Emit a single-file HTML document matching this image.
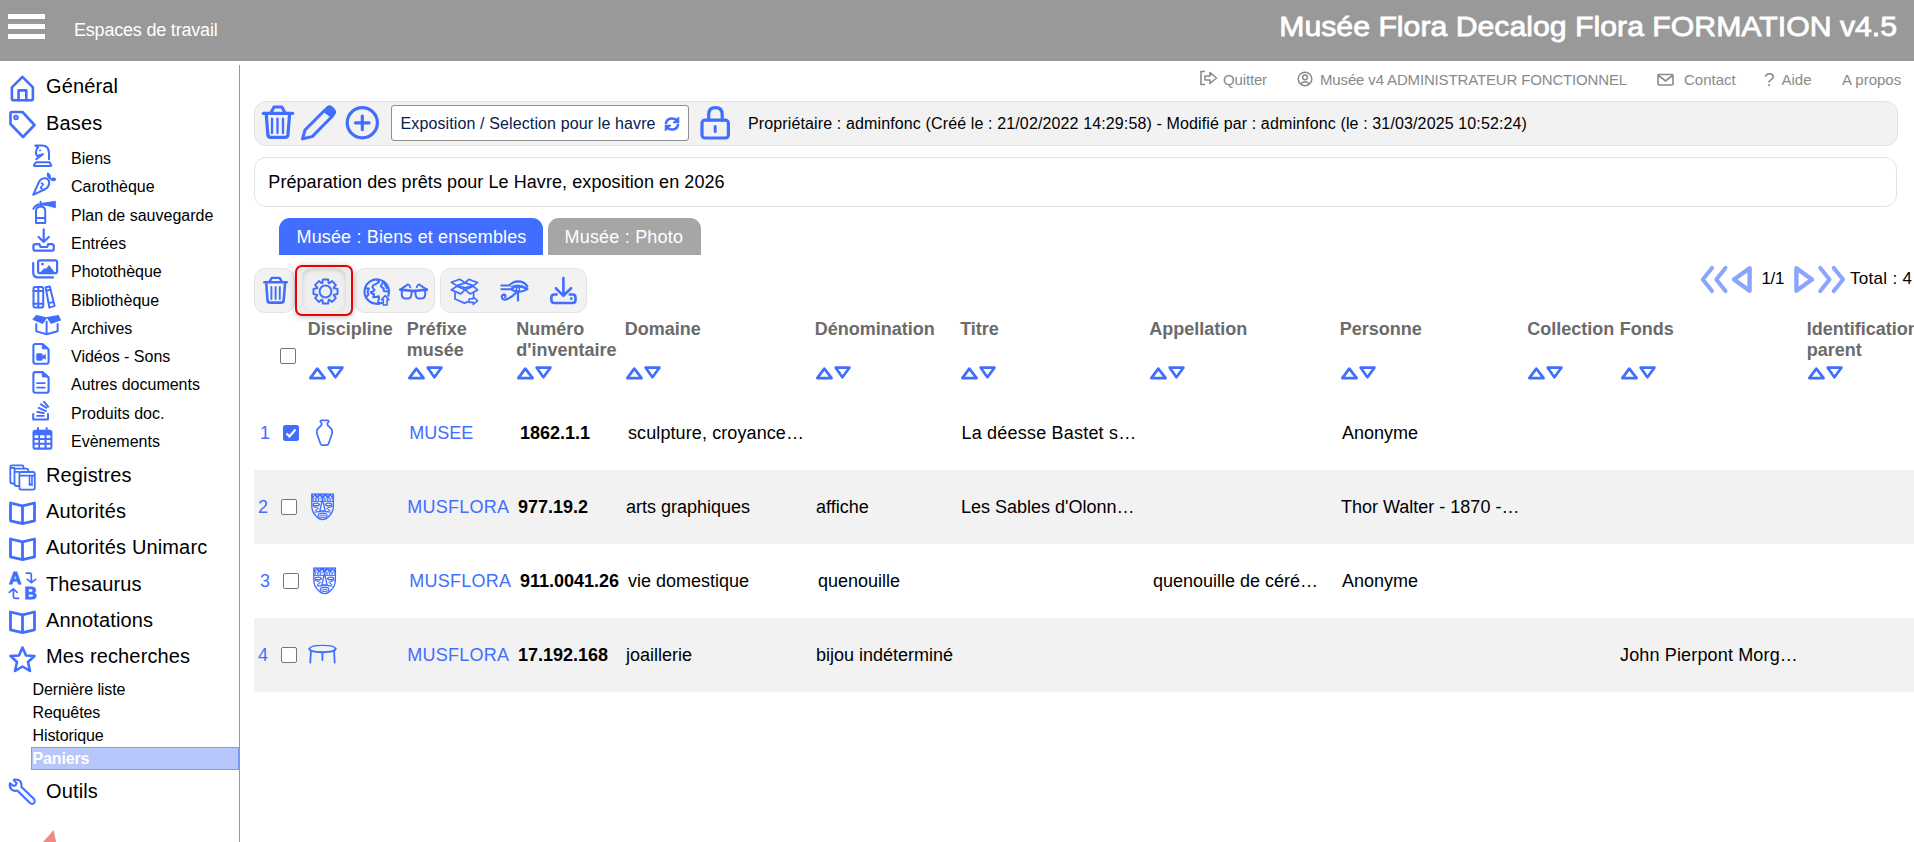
<!DOCTYPE html>
<html><head><meta charset="utf-8"><title>Flora</title>
<style>
html,body{margin:0;padding:0;}
body{width:1914px;height:842px;overflow:hidden;position:relative;background:#fff;font-family:"Liberation Sans",sans-serif;}
.t{position:absolute;white-space:nowrap;}
.ic{position:absolute;overflow:visible;}
</style></head><body>
<div style="position:absolute;left:0;top:0;width:1914px;height:61px;background:#999;"></div>
<div style="position:absolute;left:8px;top:14px;width:37px;height:5px;background:#fff;"></div>
<div style="position:absolute;left:8px;top:24px;width:37px;height:5px;background:#fff;"></div>
<div style="position:absolute;left:8px;top:34px;width:37px;height:5px;background:#fff;"></div>
<div class="t " style="left:74px;top:21px;font-size:18px;line-height:18px;color:#fff;letter-spacing:-0.2px;">Espaces de travail</div>
<div class="t" style="right:17px;top:13px;font-size:28px;line-height:28px;color:#fff;white-space:nowrap;-webkit-text-stroke:0.8px #fff;transform:scaleX(1.08);transform-origin:100% 50%;">Musée Flora Decalog Flora FORMATION v4.5</div>
<div style="position:absolute;left:239px;top:65px;width:1px;height:777px;background:#999;"></div>
<div class="t " style="left:46px;top:76px;font-size:20px;line-height:20px;color:#000;letter-spacing:0.14px;">Général</div>
<div class="t " style="left:46px;top:113px;font-size:20px;line-height:20px;color:#000;letter-spacing:0.14px;">Bases</div>
<div class="t " style="left:46px;top:465px;font-size:20px;line-height:20px;color:#000;letter-spacing:0.14px;">Registres</div>
<div class="t " style="left:46px;top:501px;font-size:20px;line-height:20px;color:#000;letter-spacing:0.14px;">Autorités</div>
<div class="t " style="left:46px;top:537px;font-size:20px;line-height:20px;color:#000;letter-spacing:0.14px;">Autorités Unimarc</div>
<div class="t " style="left:46px;top:574px;font-size:20px;line-height:20px;color:#000;letter-spacing:0.14px;">Thesaurus</div>
<div class="t " style="left:46px;top:610px;font-size:20px;line-height:20px;color:#000;letter-spacing:0.14px;">Annotations</div>
<div class="t " style="left:46px;top:646px;font-size:20px;line-height:20px;color:#000;letter-spacing:0.14px;">Mes recherches</div>
<div class="t " style="left:46px;top:781px;font-size:20px;line-height:20px;color:#000;letter-spacing:0.14px;">Outils</div>
<svg class="ic" style="left:9px;top:74px;width:28px;height:29px;" viewBox="0 0 28 29"><path d="M2.9 13.3 L13.4 2.8 L23.9 13.3 V24.5 Q23.9 26.3 22.1 26.3 H4.7 Q2.9 26.3 2.9 24.5 Z" fill="none" stroke="#416eff" stroke-width="2.6" stroke-linecap="round" stroke-linejoin="round"/><path d="M9.6 26.3 V16.4 H17.3 V26.3" fill="none" stroke="#416eff" stroke-width="2.6" stroke-linecap="round" stroke-linejoin="round"/></svg>
<svg class="ic" style="left:8px;top:110px;width:29px;height:29px;" viewBox="0 0 29 29"><path d="M2.5 3.5 Q2.5 2 4 2 H14.5 L26.5 15 L15 27 L2.5 14 Z" fill="none" stroke="#416eff" stroke-width="2.6" stroke-linecap="round" stroke-linejoin="round"/><circle cx="8" cy="7.5" r="1.8" fill="none" stroke="#416eff" stroke-width="2" stroke-linecap="round" stroke-linejoin="round"/></svg>
<svg class="ic" style="left:8px;top:463px;width:29px;height:29px;" viewBox="0 0 29 29"><path d="M6.5 20.5 H4.5 Q2.3 20.5 2.3 18.5 V4 Q2.3 2.3 4 2.3 H14 Q15.5 2.3 15.5 3.8 V5.5 M2.3 5 H6.5" fill="none" stroke="#416eff" stroke-width="1.8" stroke-linecap="round" stroke-linejoin="round"/><path d="M11.4 23 H8.5 Q6.5 23 6.5 21 V7.5 Q6.5 5.7 8.3 5.7 H18.5 Q20.3 5.7 20.3 7.5 V9 M6.5 8.8 H11.4" fill="none" stroke="#416eff" stroke-width="1.8" stroke-linecap="round" stroke-linejoin="round"/><path d="M13.2 9 H25 Q26.8 9 26.8 11 V25 Q26.8 26.6 25 26.6 H13.2 Q11.4 26.6 11.4 25 V11 Q11.4 9 13.2 9 Z M11.4 12.6 H26.8" fill="none" stroke="#416eff" stroke-width="1.8" stroke-linecap="round" stroke-linejoin="round"/><path d="M21.5 12.6 V22.3 L22.8 21 L24 22.3 V12.6" fill="none" stroke="#416eff" stroke-width="1.6" stroke-linecap="round" stroke-linejoin="round"/></svg>
<svg class="ic" style="left:8px;top:501px;width:29px;height:26px;" viewBox="0 0 29 26"><path d="M2.5 2 L14.5 4.8 L26.5 2 V19.8 L14.5 22.6 L2.5 19.8 Z M14.5 4.8 V22.6" fill="none" stroke="#416eff" stroke-width="2.8" stroke-linecap="round" stroke-linejoin="round"/></svg>
<svg class="ic" style="left:8px;top:537px;width:29px;height:26px;" viewBox="0 0 29 26"><path d="M2.5 2 L14.5 4.8 L26.5 2 V19.8 L14.5 22.6 L2.5 19.8 Z M14.5 4.8 V22.6" fill="none" stroke="#416eff" stroke-width="2.8" stroke-linecap="round" stroke-linejoin="round"/></svg>
<svg class="ic" style="left:8px;top:610px;width:29px;height:26px;" viewBox="0 0 29 26"><path d="M2.5 2 L14.5 4.8 L26.5 2 V19.8 L14.5 22.6 L2.5 19.8 Z M14.5 4.8 V22.6" fill="none" stroke="#416eff" stroke-width="2.8" stroke-linecap="round" stroke-linejoin="round"/></svg>
<div class="t" style="left:9px;top:570px;font-size:17px;line-height:17px;color:#416eff;font-weight:bold;-webkit-text-stroke:0.9px;">A</div><div class="t" style="left:24.5px;top:585px;font-size:17px;line-height:17px;color:#416eff;font-weight:bold;-webkit-text-stroke:0.9px;">B</div><svg class="ic" style="left:0px;top:568px;width:40px;height:36px;" viewBox="0 0 40 36"><path d="M26.2 5.1 H29.8 Q31.3 5.1 31.3 6.6 V14.5 M27.2 11.3 L31.4 14.7 L35.6 11.3" fill="none" stroke="#416eff" stroke-width="1.7" stroke-linecap="round" stroke-linejoin="round"/><path d="M18.7 30.3 H15 Q13.4 30.3 13.4 28.7 V21 M9.3 24.4 L13.3 20.9 L17.2 24.4" fill="none" stroke="#416eff" stroke-width="1.7" stroke-linecap="round" stroke-linejoin="round"/></svg>
<svg class="ic" style="left:8px;top:645px;width:29px;height:28px;" viewBox="0 0 29 28"><path d="M14.5 2.5 L18 10.5 L26.5 11 L20 17 L22 26 L14.5 21.5 L7 26 L9 17 L2.5 11 L11 10.5 Z" fill="none" stroke="#416eff" stroke-width="2.6" stroke-linecap="round" stroke-linejoin="round"/></svg>
<svg class="ic" style="left:8px;top:778px;width:30px;height:30px;" viewBox="0 0 30 30"><path d="M9.3 12.6 L21.5 24.5 Q24.5 27.5 26.5 24.5 Q27.5 22.5 26 21 L13.5 9 Q14 3.5 10.5 2 Q8 1 5.8 1.8 L8.6 5.4 L7.6 7.4 L5 7.8 L2 5.2 Q1 9 3.5 11.5 Q6 13.5 9.3 12.6 Z" fill="none" stroke="#416eff" stroke-width="2.1" stroke-linecap="round" stroke-linejoin="round"/></svg>
<div class="t " style="left:71px;top:151px;font-size:16px;line-height:16px;color:#000;">Biens</div>
<div class="t " style="left:71px;top:179px;font-size:16px;line-height:16px;color:#000;">Carothèque</div>
<div class="t " style="left:71px;top:208px;font-size:16px;line-height:16px;color:#000;">Plan de sauvegarde</div>
<div class="t " style="left:71px;top:236px;font-size:16px;line-height:16px;color:#000;">Entrées</div>
<div class="t " style="left:71px;top:264px;font-size:16px;line-height:16px;color:#000;">Photothèque</div>
<div class="t " style="left:71px;top:293px;font-size:16px;line-height:16px;color:#000;">Bibliothèque</div>
<div class="t " style="left:71px;top:321px;font-size:16px;line-height:16px;color:#000;">Archives</div>
<div class="t " style="left:71px;top:349px;font-size:16px;line-height:16px;color:#000;">Vidéos - Sons</div>
<div class="t " style="left:71px;top:377px;font-size:16px;line-height:16px;color:#000;">Autres documents</div>
<div class="t " style="left:71px;top:406px;font-size:16px;line-height:16px;color:#000;">Produits doc.</div>
<div class="t " style="left:71px;top:434px;font-size:16px;line-height:16px;color:#000;">Evènements</div>
<svg class="ic" style="left:26px;top:140px;width:36px;height:316px;" viewBox="26 140 36 316">
<path d="M49 159.2 V153.5 Q49 145.4 42 145.4 H35.3 L38.1 147.6 Q35.9 149.5 35.9 152.2 Q35.9 155 37.2 156 L43 154.2 L36.2 159.2" fill="none" stroke="#416eff" stroke-width="2" stroke-linecap="round" stroke-linejoin="round"/>
<ellipse cx="40.1" cy="150.4" rx="1.1" ry="0.8" fill="#416eff"/>
<path d="M34.6 166 H50.4 Q51.6 166 51.1 164.9 L49.6 162.3 H36 L34 164.9 Q33.5 166 34.6 166 Z" fill="none" stroke="#416eff" stroke-width="2" stroke-linecap="round" stroke-linejoin="round"/>
<path d="M33.2 194.8 L39.5 180.8 Q42 177.8 45.5 178.3 Q49.5 179.3 49.2 183.6 Q48.8 187 45.3 189 Z" fill="none" stroke="#416eff" stroke-width="2" stroke-linecap="round" stroke-linejoin="round"/>
<path d="M41.4 183 L43.4 184.3 L40.5 187.8 L42.5 189.2" fill="none" stroke="#416eff" stroke-width="1.5" stroke-linecap="round" stroke-linejoin="round"/>
<path d="M47.6 173.2 Q50.8 174.5 50.3 178.8 Q46.8 177.5 47.6 173.2 Z" fill="#416eff" stroke="#416eff" stroke-width="1.3" stroke-linejoin="round"/>
<path d="M50.8 179.4 Q53.5 177 55.6 179.2 Q53.5 181.6 50.8 179.4 Z" fill="#416eff" stroke="#416eff" stroke-width="1.3" stroke-linejoin="round"/>
<path d="M36 223 V211 Q36 206.4 40.6 206.4 Q45.2 206.4 45.2 211 V223 Z M36 218 H45.2" fill="none" stroke="#416eff" stroke-width="2" stroke-linecap="round" stroke-linejoin="round"/>
<path d="M40.6 201.8 V206.4 M40.6 204.3 Q35.8 204.3 33.4 208.8" fill="none" stroke="#416eff" stroke-width="2" stroke-linecap="round" stroke-linejoin="round"/>
<path d="M40.6 203.4 L47 202.6 L55.4 201.2 V207.7 L47 205.4 L40.6 205 Z" fill="#416eff" stroke="#416eff" stroke-width="0.8" stroke-linejoin="round"/>
<path d="M43.7 229.4 V242 M38.6 237 L43.7 242 L48.8 237" fill="none" stroke="#416eff" stroke-width="2.2" stroke-linecap="round" stroke-linejoin="round"/>
<path d="M39.4 244.2 H35.4 Q33.4 244.2 33.4 246.2 V248.7 Q33.4 250.7 35.4 250.7 H51.8 Q53.8 250.7 53.8 248.7 V246.2 Q53.8 244.2 51.8 244.2 H48.2 L47.2 247 H40.6 Z" fill="none" stroke="#416eff" stroke-width="2.2" stroke-linecap="round" stroke-linejoin="round"/>
<rect x="38.1" y="260.3" width="19" height="12.9" rx="2" fill="none" stroke="#416eff" stroke-width="2.2" stroke-linecap="round" stroke-linejoin="round"/>
<circle cx="42.5" cy="264.1" r="1.4" fill="#416eff"/>
<path d="M39.5 273.2 L44.4 268.1 L45.9 269 L49 265 L55.4 273.2 Z" fill="#416eff"/>
<path d="M33.2 263 V272.5 Q33.2 277.4 38 277.4 H53" fill="none" stroke="#416eff" stroke-width="2.2" stroke-linecap="round" stroke-linejoin="round"/>
<rect x="33.5" y="287" width="9.7" height="20.5" rx="1.5" fill="none" stroke="#416eff" stroke-width="2" stroke-linecap="round" stroke-linejoin="round"/>
<path d="M38.3 287 V307.5 M33.5 291 H43.2 M33.5 303.8 H43.2" fill="none" stroke="#416eff" stroke-width="2" stroke-linecap="round" stroke-linejoin="round"/>
<path d="M45.6 287.2 L49.8 286.4 L54.6 305.9 L49.4 307.6 Z M46.5 290.6 L50.7 289.7 M48.7 303.1 L53.4 302" fill="none" stroke="#416eff" stroke-width="2" stroke-linecap="round" stroke-linejoin="round"/>
<path d="M33.2 319.5 L36.3 315.7 L46.3 317.8 L42.5 323.3 Z M47.3 317.6 L58.3 315.7 L60.4 319.9 L51.4 323.3 Z" fill="#416eff" stroke="#416eff" stroke-width="1.2" stroke-linejoin="round"/>
<path d="M36.3 324 V331.4 L46.6 334.3 L57.6 331.2 V324 M46.6 321.8 V334.3" fill="none" stroke="#416eff" stroke-width="2" stroke-linecap="round" stroke-linejoin="round"/>
<path d="M33.4 346 Q33.4 344 35.4 344 H42.5 L48.6 349.5 V361.8 Q48.6 363.8 46.6 363.8 H35.4 Q33.4 363.8 33.4 361.8 Z" fill="none" stroke="#416eff" stroke-width="2.1" stroke-linecap="round" stroke-linejoin="round"/>
<path d="M42.3 343.5 V348.8 H49 Z" fill="#416eff" stroke="#416eff" stroke-width="1" stroke-linejoin="round"/>
<rect x="36.2" y="353.2" width="6.6" height="7.5" rx="1.6" fill="#416eff"/>
<path d="M42.2 356 L45.8 353.9 V359.8 L42.2 357.9 Z" fill="#416eff"/>
<path d="M33.4 374.1 Q33.4 372.1 35.4 372.1 H42.5 L48.6 377.6 V390.7 Q48.6 392.7 46.6 392.7 H35.4 Q33.4 392.7 33.4 390.7 Z" fill="none" stroke="#416eff" stroke-width="2.1" stroke-linecap="round" stroke-linejoin="round"/>
<path d="M42.3 371.6 V376.9 H49 Z" fill="#416eff" stroke="#416eff" stroke-width="1" stroke-linejoin="round"/>
<path d="M37 383.1 H44.8 M37 387.6 H44.8" fill="none" stroke="#416eff" stroke-width="1.9" stroke-linecap="round" stroke-linejoin="round"/>
<path d="M33.2 413.2 V419.5 H48 V413.2" fill="none" stroke="#416eff" stroke-width="2" stroke-linecap="butt" stroke-linejoin="round"/>
<path d="M36.3 415.9 H44.5 M36.6 411.8 L44.5 413.2 M38 407.6 L46.6 411.4 M40.4 403.9 L46.9 408.3 M43.5 401.1 L48.7 407.3" fill="none" stroke="#416eff" stroke-width="1.9" stroke-linecap="butt" stroke-linejoin="round"/>
<rect x="32.5" y="429.7" width="19.9" height="20" rx="2.6" fill="#416eff"/>
<path d="M38 427.3 V431 M46.6 427.3 V431" fill="none" stroke="#416eff" stroke-width="2" stroke-linecap="butt" stroke-linejoin="round"/>
<path d="M34.6 435.2 H38.3 V438 H34.6 Z M40 435.2 H44.5 V438 H40 Z M46.6 435.2 H50.4 V438 H46.6 Z M34.6 440 H38.3 V442.8 H34.6 Z M40 440 H44.5 V442.8 H40 Z M46.6 440 H50.4 V442.8 H46.6 Z M34.6 444.8 H38.3 V447.6 H34.6 Z M40 444.8 H44.5 V447.6 H40 Z M46.6 444.8 H50.4 V447.6 H46.6 Z" fill="#fff"/>
</svg>
<div class="t " style="left:32.5px;top:682px;font-size:16px;line-height:16px;color:#000;letter-spacing:-0.1px;">Dernière liste</div>
<div class="t " style="left:32.5px;top:705px;font-size:16px;line-height:16px;color:#000;letter-spacing:-0.1px;">Requêtes</div>
<div class="t " style="left:32.5px;top:728px;font-size:16px;line-height:16px;color:#000;letter-spacing:-0.1px;">Historique</div>
<div style="position:absolute;left:31px;top:747px;width:206px;height:21px;background:#b7c7fb;border:1px solid #7d9bf8;"></div>
<div class="t " style="left:32.5px;top:751px;font-size:16px;line-height:16px;color:#fff;font-weight:bold;letter-spacing:-0.15px;">Paniers</div>
<svg class="ic" style="left:40px;top:828px;width:20px;height:14px;" viewBox="0 0 20 14"><path d="M3 14 L13.7 2 L16 14 Z" fill="#ee8a82"/></svg>
<svg class="ic" style="left:1199px;top:70px;width:20px;height:16px;" viewBox="0 0 20 16"><path d="M6 1.5 H2 V14.5 H6" fill="none" stroke="#8a8a8a" stroke-width="1.6"/><path d="M6 6 H11 V2.5 L17.5 8 L11 13.5 V10 H6 Z" fill="none" stroke="#8a8a8a" stroke-width="1.6" stroke-linejoin="round"/></svg>
<div class="t " style="left:1223px;top:72px;font-size:15px;line-height:15px;color:#8a8a8a;letter-spacing:-0.15px;">Quitter</div>
<svg class="ic" style="left:1297px;top:71px;width:16px;height:16px;" viewBox="0 0 16 16"><circle cx="8" cy="8" r="6.8" fill="none" stroke="#8a8a8a" stroke-width="1.5"/><circle cx="8" cy="6.3" r="2.4" fill="none" stroke="#8a8a8a" stroke-width="1.5"/><path d="M3.8 12.8 Q8 8.5 12.2 12.8" fill="none" stroke="#8a8a8a" stroke-width="1.5"/></svg>
<div class="t " style="left:1320px;top:72px;font-size:15px;line-height:15px;color:#8a8a8a;letter-spacing:-0.15px;">Musée v4 ADMINISTRATEUR FONCTIONNEL</div>
<svg class="ic" style="left:1657px;top:73px;width:17px;height:13px;" viewBox="0 0 17 13"><rect x="1" y="1.5" width="15" height="10.5" rx="1" fill="none" stroke="#8a8a8a" stroke-width="1.6"/><path d="M1.5 2.5 L8.5 8 L15.5 2.5" fill="none" stroke="#8a8a8a" stroke-width="1.6"/></svg>
<div class="t " style="left:1684px;top:72px;font-size:15px;line-height:15px;color:#8a8a8a;">Contact</div>
<div class="t " style="left:1764px;top:70px;font-size:19px;line-height:19px;color:#8a8a8a;">?</div>
<div class="t " style="left:1781.5px;top:72px;font-size:15px;line-height:15px;color:#8a8a8a;">Aide</div>
<div class="t " style="left:1842px;top:72px;font-size:15px;line-height:15px;color:#8a8a8a;">A propos</div>
<div style="position:absolute;left:254px;top:101px;width:1642px;height:43px;background:#f2f2f2;border:1px solid #e3e3e3;border-radius:12px;"></div>
<svg class="ic" style="left:262px;top:105px;width:32px;height:36px;" viewBox="0 0 32 36"><path d="M1.3 8.3 H30.6" fill="none" stroke="#416eff" stroke-width="3.2" stroke-linecap="round" stroke-linejoin="round"/><path d="M8.9 7.8 L12 2 H19.9 L23 7.8" fill="none" stroke="#416eff" stroke-width="3" stroke-linecap="round" stroke-linejoin="round"/><path d="M4.3 10.2 L5.9 30.3 Q6.2 32.4 8.6 32.4 H23.2 Q25.6 32.4 25.9 30.3 L27.5 10.2" fill="none" stroke="#416eff" stroke-width="3.2" stroke-linecap="round" stroke-linejoin="round"/><path d="M10 13.6 V28 M15.5 13.6 V28 M21 13.6 V28" fill="none" stroke="#416eff" stroke-width="2.3" stroke-linecap="round" stroke-linejoin="round"/></svg>
<svg class="ic" style="left:301px;top:105px;width:36px;height:36px;" viewBox="0 0 36 36"><path d="M4 25 L23.2 5.8 L31.5 11 L11.2 31.6 L1.5 33.8 Z" fill="none" stroke="#416eff" stroke-width="3" stroke-linecap="round" stroke-linejoin="round"/><path d="M23.2 5.8 L26.5 2.5 Q28.5 0.8 30.5 2.5 L33 5 Q34.8 7 33 9 L30.5 11.5 Z" fill="#416eff" stroke="#416eff" stroke-width="2.6" stroke-linejoin="round"/></svg>
<svg class="ic" style="left:344px;top:105px;width:36px;height:36px;" viewBox="0 0 36 36"><circle cx="18.3" cy="17.7" r="15.1" fill="none" stroke="#416eff" stroke-width="3.2" stroke-linecap="round" stroke-linejoin="round"/><path d="M18.3 11 V24.6 M11.5 17.8 H25.1" fill="none" stroke="#416eff" stroke-width="3.2" stroke-linecap="round" stroke-linejoin="round"/></svg>
<div style="position:absolute;left:391px;top:105px;width:296px;height:34px;background:#fff;border:1px solid #8f8f8f;border-radius:3px;"></div>
<div class="t " style="left:400.5px;top:116px;font-size:16px;line-height:16px;color:#06204f;letter-spacing:0.12px;">Exposition / Selection pour le havre</div>
<svg class="ic" style="left:663px;top:116px;width:18px;height:16px;" viewBox="0 0 18 16"><path d="M3 7 Q4 2.5 9 2.5 Q12.5 2.5 14.5 5" fill="none" stroke="#416eff" stroke-width="2.6" stroke-linecap="round" stroke-linejoin="round"/><path d="M15.5 1 V6.5 H10" fill="#416eff" stroke="#416eff" stroke-width="1.5"/><path d="M15 9 Q14 13.5 9 13.5 Q5.5 13.5 3.5 11" fill="none" stroke="#416eff" stroke-width="2.6" stroke-linecap="round" stroke-linejoin="round"/><path d="M2.5 15 V9.5 H8" fill="#416eff" stroke="#416eff" stroke-width="1.5"/></svg>
<svg class="ic" style="left:699px;top:105px;width:32px;height:36px;" viewBox="0 0 32 36"><path d="M9.7 15 V9.4 Q9.7 2.6 16.45 2.6 Q23.2 2.6 23.2 9.4 V15" fill="none" stroke="#416eff" stroke-width="3.2" stroke-linecap="round" stroke-linejoin="round"/><rect x="3" y="15.2" width="26.4" height="17.8" rx="3" fill="none" stroke="#416eff" stroke-width="3.2" stroke-linecap="round" stroke-linejoin="round"/><path d="M16.2 21.6 V26.5" fill="none" stroke="#416eff" stroke-width="3" stroke-linecap="round" stroke-linejoin="round"/></svg>
<div class="t " style="left:748px;top:116px;font-size:16px;line-height:16px;color:#000;letter-spacing:0.13px;">Propriétaire : adminfonc (Créé le : 21/02/2022 14:29:58) - Modifié par : adminfonc (le : 31/03/2025 10:52:24)</div>
<div style="position:absolute;left:254px;top:157px;width:1641px;height:48px;background:#fff;border:1px solid #e3e3e3;border-radius:12px;"></div>
<div class="t " style="left:268.3px;top:173px;font-size:18px;line-height:18px;color:#000;letter-spacing:0.075px;">Préparation des prêts pour Le Havre, exposition en 2026</div>
<div style="position:absolute;left:279px;top:218px;width:264px;height:37px;background:#416eff;border-radius:11px 11px 0 0;"></div>
<div class="t " style="left:296.5px;top:228px;font-size:18px;line-height:18px;color:#fff;letter-spacing:0.15px;">Musée : Biens et ensembles</div>
<div style="position:absolute;left:548px;top:218px;width:153px;height:37px;background:#a6a6a6;border-radius:11px 11px 0 0;"></div>
<div class="t " style="left:564.5px;top:228px;font-size:18px;line-height:18px;color:#fff;letter-spacing:0.2px;">Musée : Photo</div>
<div style="position:absolute;top:268px;height:43px;background:#f2f2f2;border:1px solid #e3e3e3;border-radius:11px;left:254px;width:39px;"></div>
<div style="position:absolute;top:268px;height:43px;background:#f2f2f2;border:1px solid #e3e3e3;border-radius:11px;left:354px;width:79px;"></div>
<div style="position:absolute;top:268px;height:43px;background:#f2f2f2;border:1px solid #e3e3e3;border-radius:11px;left:440px;width:145px;"></div>
<div style="position:absolute;left:295px;top:265px;width:54px;height:47px;border:2px solid #ee0000;border-radius:7px;background:#ececec;box-shadow:0 1px 6px rgba(0,0,0,0.25);"></div>
<div style="position:absolute;left:302px;top:268px;width:44px;height:44px;border-radius:10px;background:#efefef;box-shadow:inset 0 2px 4px rgba(0,0,0,0.15);"></div>
<svg class="ic" style="left:260px;top:272px;width:30px;height:36px;" viewBox="260 272 30 36"><path d="M264.4 282.3 H286.8" fill="none" stroke="#416eff" stroke-width="2.6" stroke-linecap="round" stroke-linejoin="round"/><path d="M269.5 281.6 L271.8 277.9 H279.6 L281.8 281.6" fill="none" stroke="#416eff" stroke-width="2.4" stroke-linecap="round" stroke-linejoin="round"/><path d="M266.3 284 L267.5 300.5 Q267.8 302.6 270 302.6 H281.2 Q283.4 302.6 283.7 300.5 L285 284" fill="none" stroke="#416eff" stroke-width="2.6" stroke-linecap="round" stroke-linejoin="round"/><path d="M271.4 287 V299 M275.6 287 V299 M279.8 287 V299" fill="none" stroke="#416eff" stroke-width="1.9" stroke-linecap="round" stroke-linejoin="round"/></svg>
<svg class="ic" style="left:300px;top:270px;width:290px;height:40px;" viewBox="300 270 290 40">
<path d="M322.88 279.48 L328.12 279.48 L328.67 283.08 L329.21 283.30 L332.14 281.15 L335.85 284.86 L333.70 287.79 L333.92 288.33 L337.52 288.88 L337.52 294.12 L333.92 294.67 L333.70 295.21 L335.85 298.14 L332.14 301.85 L329.21 299.70 L328.67 299.92 L328.12 303.52 L322.88 303.52 L322.33 299.92 L321.79 299.70 L318.86 301.85 L315.15 298.14 L317.30 295.21 L317.08 294.67 L313.48 294.12 L313.48 288.88 L317.08 288.33 L317.30 287.79 L315.15 284.86 L318.86 281.15 L321.79 283.30 L322.33 283.08 Z" fill="none" stroke="#416eff" stroke-width="2" stroke-linecap="round" stroke-linejoin="round"/><circle cx="325.5" cy="291.5" r="5.9" fill="none" stroke="#416eff" stroke-width="2" stroke-linecap="round" stroke-linejoin="round"/>
<path d="M381.6 302.9 Q378 304.5 376.5 303.8 A12.2 12.2 0 1 1 388.2 295.8" fill="none" stroke="#416eff" stroke-width="2.1" stroke-linecap="round" stroke-linejoin="round"/>
<path d="M365.1 288.2 L368.9 288.6 L367.5 292 L368.5 294.3 L366.6 296.7" fill="none" stroke="#416eff" stroke-width="2" stroke-linecap="round" stroke-linejoin="round"/>
<path d="M377 280 Q380 282 378.4 282.7 L373.2 285.3 Q371.8 287 372.7 287.6 L374.6 290 Q374 291.5 370.8 292 Q371 293.5 374.2 294.3 L373.2 297.2 Q376 297 378.9 296.2 Q379.5 298 378.4 300.5 L378 302.9 H381.8" fill="none" stroke="#416eff" stroke-width="2" stroke-linecap="round" stroke-linejoin="round"/>
<path d="M383.2 282 L380.8 286.3 L383.7 288.6 L383.7 291 L387.9 291.5 M384.6 283.9 L386.8 288.4" fill="none" stroke="#416eff" stroke-width="2" stroke-linecap="round" stroke-linejoin="round"/>
<path d="M383.3 305 V299.6 H381.5 L385.2 295.6 L388.9 299.6 H387.1 V305 Z" fill="none" stroke="#416eff" stroke-width="1.6" stroke-linecap="round" stroke-linejoin="round"/>
<path d="M400.3 289.6 L413.6 291 L426.9 289.6" fill="none" stroke="#416eff" stroke-width="2.6" stroke-linecap="round" stroke-linejoin="round"/>
<path d="M401.8 290 V294.5 Q401.8 298.6 406 298.6 H407.5 Q411.2 298.6 411.5 294 L411.8 290.6 M425.2 290 V294.5 Q425.2 298.6 421 298.6 H419.5 Q415.8 298.6 415.5 294 L415.2 290.6" fill="none" stroke="#416eff" stroke-width="2" stroke-linecap="round" stroke-linejoin="round"/>
<path d="M400.3 289.6 L407.9 284.4 Q409 284.2 410.3 287.2 M426.9 289.6 L419 284.4 Q418 284.2 416.7 287.2" fill="none" stroke="#416eff" stroke-width="1.9" stroke-linecap="round" stroke-linejoin="round"/>
<path d="M451.3 282.2 L459.7 279.3 L465.2 282.8 L456.8 285.6 Z M468.7 279.3 L477.6 282.6 L473.3 285.6 L465.2 282.8 Z M456.8 285.6 L465.2 283 L473.3 285.6 L465.2 287.7 Z" fill="none" stroke="#416eff" stroke-width="1.7" stroke-linecap="round" stroke-linejoin="round"/>
<path d="M451.3 289.9 L456.8 286.3 L465.2 289.6 L460.8 293.9 Z M465.2 289.6 L473.3 286.3 L477.6 289.9 L470 293.9 Z" fill="none" stroke="#416eff" stroke-width="1.7" stroke-linecap="round" stroke-linejoin="round"/>
<path d="M455 292.5 V299 L464.5 303.1 L468.1 301.6 M473.6 292.5 V296.9" fill="none" stroke="#416eff" stroke-width="1.7" stroke-linecap="round" stroke-linejoin="round"/>
<path d="M469.2 298.7 H473.3 V297.2 L477.6 300.6 L473.3 304.4 V302.4 H469.2 Z" fill="none" stroke="#416eff" stroke-width="1.6" stroke-linecap="round" stroke-linejoin="round"/>
<path d="M501.4 285.5 H509.1 Q513 281.5 517.9 281.3 Q524 281.3 527.4 286.3" fill="none" stroke="#416eff" stroke-width="2.2" stroke-linecap="round" stroke-linejoin="round"/>
<path d="M511.3 286.9 Q517.9 283 527.4 288.3" fill="none" stroke="#416eff" stroke-width="1.5" stroke-linecap="round" stroke-linejoin="round"/>
<path d="M501.4 289.2 H509.8 M511 289.2 Q517.9 283.8 527.4 289.2 Q517.9 294.5 511 289.2" fill="none" stroke="#416eff" stroke-width="2.1" stroke-linecap="round" stroke-linejoin="round"/>
<circle cx="517.9" cy="289.2" r="1.7" fill="none" stroke="#416eff" stroke-width="1.5" stroke-linecap="round" stroke-linejoin="round"/>
<path d="M516.4 292.3 Q512 297.5 506.5 299.4 Q502.3 300.3 501.8 297 Q501.8 294.6 504.2 294.6 Q506 295.2 505.2 297" fill="none" stroke="#416eff" stroke-width="2.2" stroke-linecap="round" stroke-linejoin="round"/>
<path d="M518 292.5 V300.5" fill="none" stroke="#416eff" stroke-width="2.2" stroke-linecap="round" stroke-linejoin="round"/>
<path d="M563.4 278 V295.8 M555.8 288.2 L563.4 295.8 L571.1 288.2" fill="none" stroke="#416eff" stroke-width="2.6" stroke-linecap="round" stroke-linejoin="round"/>
<path d="M556.7 294.5 H554.4 Q551.4 294.5 551.4 297.5 V300 Q551.4 303 554.4 303 H572.5 Q575.5 303 575.5 300 V297.5 Q575.5 294.5 572.5 294.5 H569.8" fill="none" stroke="#416eff" stroke-width="2.6" stroke-linecap="round" stroke-linejoin="round"/>
<circle cx="571.3" cy="298.7" r="1.4" fill="#416eff"/>
</svg>
<svg class="ic" style="left:1699px;top:264px;width:32px;height:31px;" viewBox="0 0 32 31"><path d="M13 3.9 L3.8 15.5 L13 27.1 M26.5 3.9 L17.3 15.5 L26.5 27.1" fill="none" stroke="#8aa5fb" stroke-linecap="round" stroke-linejoin="round" stroke-width="4"/></svg>
<svg class="ic" style="left:1730px;top:264px;width:24px;height:31px;" viewBox="0 0 24 31"><path d="M19.6 4.3 V26.7 L4 15.5 Z" fill="none" stroke="#8aa5fb" stroke-linecap="round" stroke-linejoin="round" stroke-width="4.4"/></svg>
<div class="t " style="left:1761.5px;top:270px;font-size:17px;line-height:17px;color:#000;letter-spacing:-0.4px;">1/1</div>
<svg class="ic" style="left:1792px;top:264px;width:24px;height:31px;" viewBox="0 0 24 31"><path d="M4.4 4.3 V26.7 L20 15.5 Z" fill="none" stroke="#8aa5fb" stroke-linecap="round" stroke-linejoin="round" stroke-width="4.4"/></svg>
<svg class="ic" style="left:1816px;top:264px;width:32px;height:31px;" viewBox="0 0 32 31"><path d="M4.3 3.9 L13.5 15.5 L4.3 27.1 M17.8 3.9 L27 15.5 L17.8 27.1" fill="none" stroke="#8aa5fb" stroke-linecap="round" stroke-linejoin="round" stroke-width="4"/></svg>
<div class="t " style="left:1850px;top:270px;font-size:17px;line-height:17px;color:#000;letter-spacing:0.3px;">Total : 4</div>
<div class="t" style="left:307.7px;top:319.26px;font-size:18px;line-height:20.6px;color:#6b6b6b;font-weight:bold;">Discipline</div>
<svg class="ic" style="left:307.5px;top:365px;width:38px;height:16px;" viewBox="0 0 38 16"><path d="M9.3 3.6 L16.6 13.1 H2.3 Z M20.7 2.7 H34.4 L27.4 12.2 Z" fill="none" stroke="#416eff" stroke-width="2.7" stroke-linejoin="round"/></svg>
<div class="t" style="left:406.7px;top:319.26px;font-size:18px;line-height:20.6px;color:#6b6b6b;font-weight:bold;">Préfixe<br>musée</div>
<svg class="ic" style="left:406.5px;top:365px;width:38px;height:16px;" viewBox="0 0 38 16"><path d="M9.3 3.6 L16.6 13.1 H2.3 Z M20.7 2.7 H34.4 L27.4 12.2 Z" fill="none" stroke="#416eff" stroke-width="2.7" stroke-linejoin="round"/></svg>
<div class="t" style="left:516.2px;top:319.26px;font-size:18px;line-height:20.6px;color:#6b6b6b;font-weight:bold;">Numéro<br>d'inventaire</div>
<svg class="ic" style="left:516px;top:365px;width:38px;height:16px;" viewBox="0 0 38 16"><path d="M9.3 3.6 L16.6 13.1 H2.3 Z M20.7 2.7 H34.4 L27.4 12.2 Z" fill="none" stroke="#416eff" stroke-width="2.7" stroke-linejoin="round"/></svg>
<div class="t" style="left:624.7px;top:319.26px;font-size:18px;line-height:20.6px;color:#6b6b6b;font-weight:bold;">Domaine</div>
<svg class="ic" style="left:624.5px;top:365px;width:38px;height:16px;" viewBox="0 0 38 16"><path d="M9.3 3.6 L16.6 13.1 H2.3 Z M20.7 2.7 H34.4 L27.4 12.2 Z" fill="none" stroke="#416eff" stroke-width="2.7" stroke-linejoin="round"/></svg>
<div class="t" style="left:814.7px;top:319.26px;font-size:18px;line-height:20.6px;color:#6b6b6b;font-weight:bold;">Dénomination</div>
<svg class="ic" style="left:814.5px;top:365px;width:38px;height:16px;" viewBox="0 0 38 16"><path d="M9.3 3.6 L16.6 13.1 H2.3 Z M20.7 2.7 H34.4 L27.4 12.2 Z" fill="none" stroke="#416eff" stroke-width="2.7" stroke-linejoin="round"/></svg>
<div class="t" style="left:960.2px;top:319.26px;font-size:18px;line-height:20.6px;color:#6b6b6b;font-weight:bold;">Titre</div>
<svg class="ic" style="left:960px;top:365px;width:38px;height:16px;" viewBox="0 0 38 16"><path d="M9.3 3.6 L16.6 13.1 H2.3 Z M20.7 2.7 H34.4 L27.4 12.2 Z" fill="none" stroke="#416eff" stroke-width="2.7" stroke-linejoin="round"/></svg>
<div class="t" style="left:1149.2px;top:319.26px;font-size:18px;line-height:20.6px;color:#6b6b6b;font-weight:bold;">Appellation</div>
<svg class="ic" style="left:1149px;top:365px;width:38px;height:16px;" viewBox="0 0 38 16"><path d="M9.3 3.6 L16.6 13.1 H2.3 Z M20.7 2.7 H34.4 L27.4 12.2 Z" fill="none" stroke="#416eff" stroke-width="2.7" stroke-linejoin="round"/></svg>
<div class="t" style="left:1339.7px;top:319.26px;font-size:18px;line-height:20.6px;color:#6b6b6b;font-weight:bold;">Personne</div>
<svg class="ic" style="left:1339.5px;top:365px;width:38px;height:16px;" viewBox="0 0 38 16"><path d="M9.3 3.6 L16.6 13.1 H2.3 Z M20.7 2.7 H34.4 L27.4 12.2 Z" fill="none" stroke="#416eff" stroke-width="2.7" stroke-linejoin="round"/></svg>
<div class="t" style="left:1527.2px;top:319.26px;font-size:18px;line-height:20.6px;color:#6b6b6b;font-weight:bold;">Collection</div>
<svg class="ic" style="left:1527px;top:365px;width:38px;height:16px;" viewBox="0 0 38 16"><path d="M9.3 3.6 L16.6 13.1 H2.3 Z M20.7 2.7 H34.4 L27.4 12.2 Z" fill="none" stroke="#416eff" stroke-width="2.7" stroke-linejoin="round"/></svg>
<div class="t" style="left:1619.7px;top:319.26px;font-size:18px;line-height:20.6px;color:#6b6b6b;font-weight:bold;">Fonds</div>
<svg class="ic" style="left:1619.5px;top:365px;width:38px;height:16px;" viewBox="0 0 38 16"><path d="M9.3 3.6 L16.6 13.1 H2.3 Z M20.7 2.7 H34.4 L27.4 12.2 Z" fill="none" stroke="#416eff" stroke-width="2.7" stroke-linejoin="round"/></svg>
<div class="t" style="left:1806.7px;top:319.26px;font-size:18px;line-height:20.6px;color:#6b6b6b;font-weight:bold;">Identification<br>parent</div>
<svg class="ic" style="left:1806.5px;top:365px;width:38px;height:16px;" viewBox="0 0 38 16"><path d="M9.3 3.6 L16.6 13.1 H2.3 Z M20.7 2.7 H34.4 L27.4 12.2 Z" fill="none" stroke="#416eff" stroke-width="2.7" stroke-linejoin="round"/></svg>
<div style="position:absolute;left:280px;top:348px;width:14px;height:14px;background:#fff;border:1px solid #767676;border-radius:2px;"></div>
<div style="position:absolute;left:254px;top:396px;width:1660px;height:74px;background:#fff;"></div>
<div class="t " style="left:260px;top:424px;font-size:18px;line-height:18px;color:#416eff;">1</div>
<svg class="ic" style="left:283px;top:425px;width:16px;height:16px;" viewBox="0 0 16 16"><rect x="0" y="0" width="16" height="16" rx="2.5" fill="#416eff"/><path d="M3.5 8.5 L6.5 11.5 L12.5 4.5" fill="none" stroke="#fff" stroke-width="2.2"/></svg>
<svg class="ic" style="left:300px;top:396px;width:45px;height:74px;" viewBox="300 396 45 74"><path d="M321.5 420.4 H327.6 Q328.7 420.4 328.7 421.5 Q328.7 422.8 327.4 423 V424.5 Q327.6 425.7 329.5 427 Q332 429 332.2 431.5 Q332.3 433 331.6 435 L328.5 443.8 Q328 445.2 326.5 445.2 H322.5 Q321 445.2 320.5 443.8 L317.4 435 Q316.7 433 316.8 431.5 Q317 429 319.5 427 Q321.4 425.7 321.6 424.5 V423 Q320.3 422.8 320.3 421.5 Q320.3 420.4 321.5 420.4 Z" fill="none" stroke="#416eff" stroke-width="1.7" stroke-linecap="round" stroke-linejoin="round"/></svg>
<div class="t " style="left:409.2px;top:424px;font-size:18px;line-height:18px;color:#416eff;">MUSEE</div>
<div class="t " style="left:520px;top:424px;font-size:18px;line-height:18px;color:#000;font-weight:bold;">1862.1.1</div>
<div class="t " style="left:628px;top:424px;font-size:18px;line-height:18px;color:#000;letter-spacing:0.1px;">sculpture, croyance…</div>
<div class="t " style="left:961.5px;top:424px;font-size:18px;line-height:18px;color:#000;letter-spacing:0.2px;">La déesse Bastet s…</div>
<div class="t " style="left:1342px;top:424px;font-size:18px;line-height:18px;color:#000;">Anonyme</div>
<div style="position:absolute;left:254px;top:470px;width:1660px;height:74px;background:#f2f2f2;"></div>
<div class="t " style="left:258px;top:498px;font-size:18px;line-height:18px;color:#416eff;">2</div>
<div style="position:absolute;left:281px;top:499px;width:14px;height:14px;background:#fff;border:1px solid #767676;border-radius:2px;"></div>
<svg class="ic" style="left:300px;top:470px;width:45px;height:74px;" viewBox="300 470 45 74"><g transform="translate(0,0)"><path d="M311.8 494.2 H333.4 V506 Q333.4 512 329 516.3 Q326 519.6 322.6 519.6 Q319.2 519.6 316.2 516.3 Q311.8 512 311.8 506 Z" fill="none" stroke="#416eff" stroke-width="1.3" stroke-linecap="round" stroke-linejoin="round"/><path d="M311.5 493.8 H333.7 V498.6 H311.5 Z" fill="#416eff"/><path d="M313.2 497.8 L314.7 495.8 L316.2 497.8 Z M318.4 497.8 L319.9 495.8 L321.4 497.8 Z M323.8 497.8 L325.3 495.8 L326.8 497.8 Z M329 497.8 L330.5 495.8 L332 497.8 Z" fill="#fff" opacity="0.9"/><path d="M312.4 494.8 L313.4 496 L314.4 494.8 Z M316.5 494.8 L317.3 496 L318.1 494.8 Z M321.9 494.8 L322.6 496 L323.3 494.8 Z M327.1 494.8 L327.9 496 L328.7 494.8 Z M331 494.8 L331.8 496 L332.6 494.8 Z" fill="#fff" opacity="0.8"/><path d="M312.5 499.9 H320.5 M324.3 499.9 H332.7" stroke="#416eff" stroke-width="1.6" stroke-dasharray="1.4 1.2"/><path d="M311.8 501.4 H333.4" fill="none" stroke="#416eff" stroke-width="1" stroke-linecap="round" stroke-linejoin="round"/><ellipse cx="316.2" cy="504.4" rx="3" ry="1.3" fill="none" stroke="#416eff" stroke-width="1.4" stroke-linecap="round" stroke-linejoin="round"/><ellipse cx="328.7" cy="504.4" rx="3" ry="1.3" fill="none" stroke="#416eff" stroke-width="1.4" stroke-linecap="round" stroke-linejoin="round"/><path d="M322.5 498.8 L319.9 510.9 H325.1 Z" fill="#fff" stroke="#416eff" stroke-width="1.4" stroke-linejoin="round"/><path d="M312.8 506.4 L318.6 508.4 L315 510.6 L319 512 M332.4 506.4 L326.6 508.4 L330.2 510.6 L326.2 512" fill="none" stroke="#416eff" stroke-width="1" stroke-linecap="round" stroke-linejoin="round"/><path d="M315 512.2 Q322.6 509.8 330.2 512.2" fill="none" stroke="#416eff" stroke-width="1" stroke-linecap="round" stroke-linejoin="round"/><ellipse cx="322.6" cy="515.3" rx="4.3" ry="2.1" fill="#fff" stroke="#416eff" stroke-width="1.2"/><path d="M320.3 515.3 H324.9" fill="none" stroke="#416eff" stroke-width="1.1" stroke-linecap="round" stroke-linejoin="round"/></g></svg>
<div class="t " style="left:407.3px;top:498px;font-size:18px;line-height:18px;color:#416eff;letter-spacing:0.25px;">MUSFLORA</div>
<div class="t " style="left:518px;top:498px;font-size:18px;line-height:18px;color:#000;font-weight:bold;">977.19.2</div>
<div class="t " style="left:626px;top:498px;font-size:18px;line-height:18px;color:#000;">arts graphiques</div>
<div class="t " style="left:816px;top:498px;font-size:18px;line-height:18px;color:#000;">affiche</div>
<div class="t " style="left:961px;top:498px;font-size:18px;line-height:18px;color:#000;">Les Sables d'Olonn…</div>
<div class="t " style="left:1341px;top:498px;font-size:18px;line-height:18px;color:#000;">Thor Walter - 1870 -…</div>
<div style="position:absolute;left:254px;top:544px;width:1660px;height:74px;background:#fff;"></div>
<div class="t " style="left:260px;top:572px;font-size:18px;line-height:18px;color:#416eff;">3</div>
<div style="position:absolute;left:283px;top:573px;width:14px;height:14px;background:#fff;border:1px solid #767676;border-radius:2px;"></div>
<svg class="ic" style="left:300px;top:544px;width:45px;height:74px;" viewBox="300 470 45 74"><g transform="translate(2,0)"><path d="M311.8 494.2 H333.4 V506 Q333.4 512 329 516.3 Q326 519.6 322.6 519.6 Q319.2 519.6 316.2 516.3 Q311.8 512 311.8 506 Z" fill="none" stroke="#416eff" stroke-width="1.3" stroke-linecap="round" stroke-linejoin="round"/><path d="M311.5 493.8 H333.7 V498.6 H311.5 Z" fill="#416eff"/><path d="M313.2 497.8 L314.7 495.8 L316.2 497.8 Z M318.4 497.8 L319.9 495.8 L321.4 497.8 Z M323.8 497.8 L325.3 495.8 L326.8 497.8 Z M329 497.8 L330.5 495.8 L332 497.8 Z" fill="#fff" opacity="0.9"/><path d="M312.4 494.8 L313.4 496 L314.4 494.8 Z M316.5 494.8 L317.3 496 L318.1 494.8 Z M321.9 494.8 L322.6 496 L323.3 494.8 Z M327.1 494.8 L327.9 496 L328.7 494.8 Z M331 494.8 L331.8 496 L332.6 494.8 Z" fill="#fff" opacity="0.8"/><path d="M312.5 499.9 H320.5 M324.3 499.9 H332.7" stroke="#416eff" stroke-width="1.6" stroke-dasharray="1.4 1.2"/><path d="M311.8 501.4 H333.4" fill="none" stroke="#416eff" stroke-width="1" stroke-linecap="round" stroke-linejoin="round"/><ellipse cx="316.2" cy="504.4" rx="3" ry="1.3" fill="none" stroke="#416eff" stroke-width="1.4" stroke-linecap="round" stroke-linejoin="round"/><ellipse cx="328.7" cy="504.4" rx="3" ry="1.3" fill="none" stroke="#416eff" stroke-width="1.4" stroke-linecap="round" stroke-linejoin="round"/><path d="M322.5 498.8 L319.9 510.9 H325.1 Z" fill="#fff" stroke="#416eff" stroke-width="1.4" stroke-linejoin="round"/><path d="M312.8 506.4 L318.6 508.4 L315 510.6 L319 512 M332.4 506.4 L326.6 508.4 L330.2 510.6 L326.2 512" fill="none" stroke="#416eff" stroke-width="1" stroke-linecap="round" stroke-linejoin="round"/><path d="M315 512.2 Q322.6 509.8 330.2 512.2" fill="none" stroke="#416eff" stroke-width="1" stroke-linecap="round" stroke-linejoin="round"/><ellipse cx="322.6" cy="515.3" rx="4.3" ry="2.1" fill="#fff" stroke="#416eff" stroke-width="1.2"/><path d="M320.3 515.3 H324.9" fill="none" stroke="#416eff" stroke-width="1.1" stroke-linecap="round" stroke-linejoin="round"/></g></svg>
<div class="t " style="left:409.3px;top:572px;font-size:18px;line-height:18px;color:#416eff;letter-spacing:0.25px;">MUSFLORA</div>
<div class="t " style="left:520px;top:572px;font-size:18px;line-height:18px;color:#000;font-weight:bold;">911.0041.26</div>
<div class="t " style="left:628px;top:572px;font-size:18px;line-height:18px;color:#000;">vie domestique</div>
<div class="t " style="left:818px;top:572px;font-size:18px;line-height:18px;color:#000;">quenouille</div>
<div class="t " style="left:1153px;top:572px;font-size:18px;line-height:18px;color:#000;">quenouille de céré…</div>
<div class="t " style="left:1342px;top:572px;font-size:18px;line-height:18px;color:#000;">Anonyme</div>
<div style="position:absolute;left:254px;top:618px;width:1660px;height:74px;background:#f2f2f2;"></div>
<div class="t " style="left:258px;top:646px;font-size:18px;line-height:18px;color:#416eff;">4</div>
<div style="position:absolute;left:281px;top:647px;width:14px;height:14px;background:#fff;border:1px solid #767676;border-radius:2px;"></div>
<svg class="ic" style="left:300px;top:618px;width:45px;height:74px;" viewBox="300 618 45 74"><path d="M309.4 649.3 Q309.2 645.3 322.5 645.3 Q335.8 645.3 335.6 649.3" fill="none" stroke="#416eff" stroke-width="1.3" stroke-linecap="round" stroke-linejoin="round"/><path d="M309.4 648.8 Q309.6 652.2 322.5 652.2 Q335.4 652.2 335.6 648.8" fill="none" stroke="#416eff" stroke-width="2.1" stroke-linecap="round" stroke-linejoin="round"/><path d="M310.9 651.3 L310.3 662.6 M334.1 651.3 L334.7 662.6 M322.4 652.6 V660" fill="none" stroke="#416eff" stroke-width="1.8" stroke-linecap="round" stroke-linejoin="round"/></svg>
<div class="t " style="left:407.3px;top:646px;font-size:18px;line-height:18px;color:#416eff;letter-spacing:0.25px;">MUSFLORA</div>
<div class="t " style="left:518px;top:646px;font-size:18px;line-height:18px;color:#000;font-weight:bold;">17.192.168</div>
<div class="t " style="left:626px;top:646px;font-size:18px;line-height:18px;color:#000;">joaillerie</div>
<div class="t " style="left:816px;top:646px;font-size:18px;line-height:18px;color:#000;">bijou indéterminé</div>
<div class="t " style="left:1620px;top:646px;font-size:18px;line-height:18px;color:#000;letter-spacing:0.15px;">John Pierpont Morg…</div>
</body></html>
